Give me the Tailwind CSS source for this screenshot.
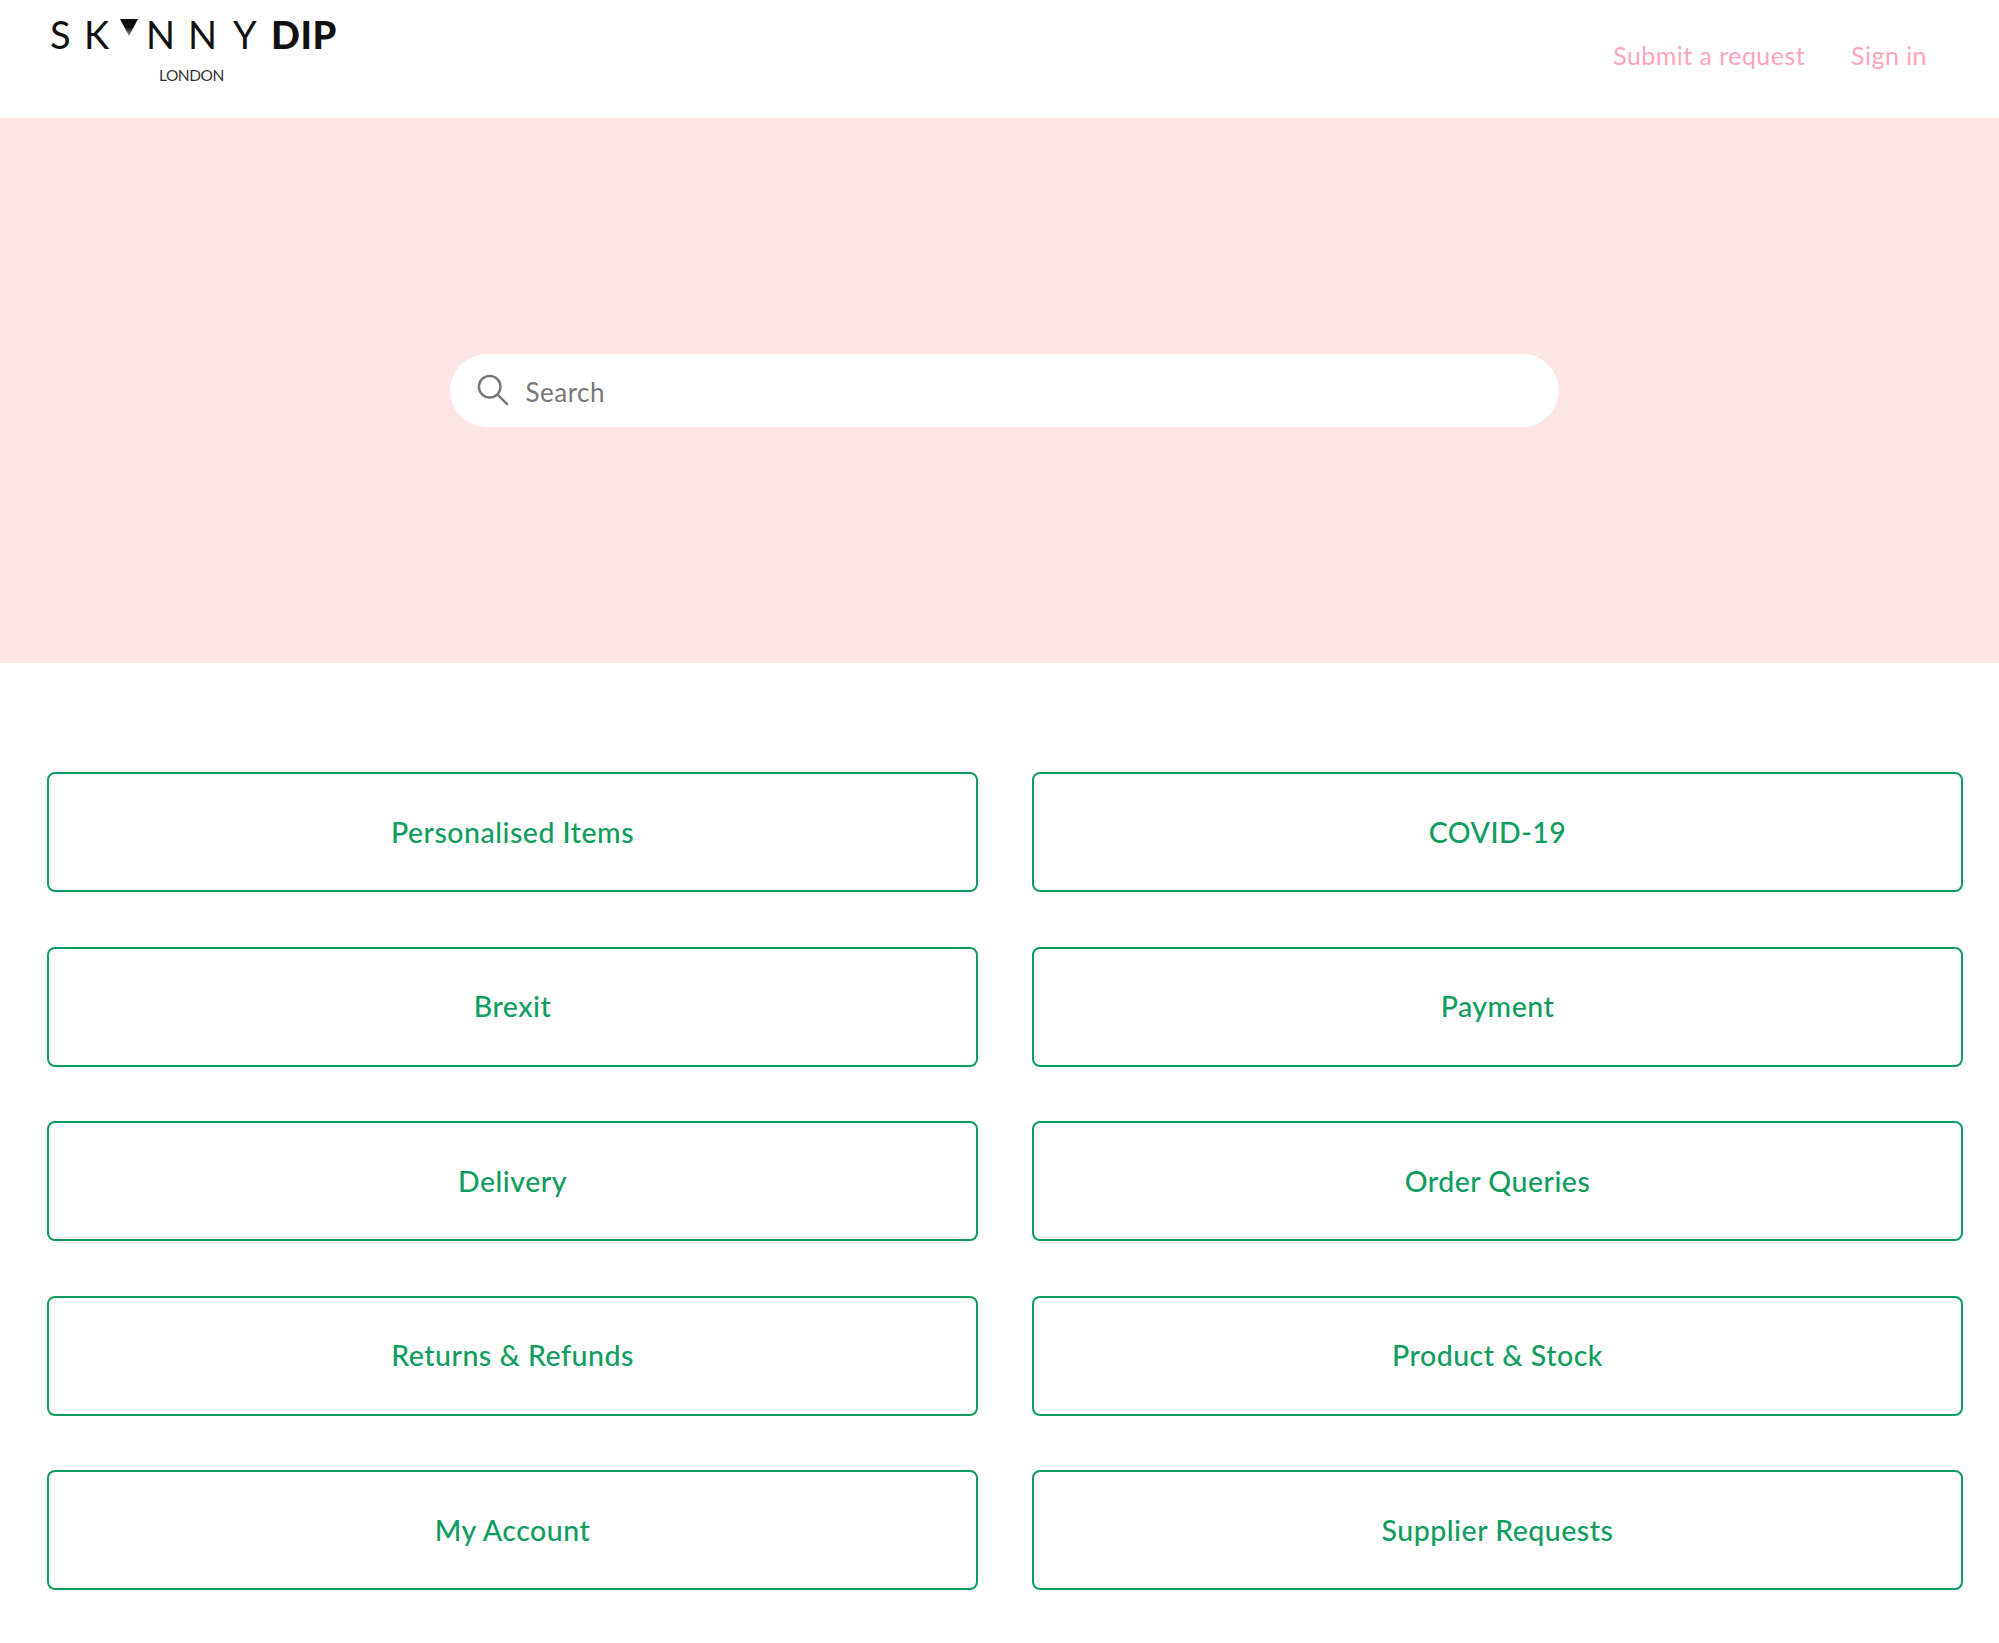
<!DOCTYPE html>
<html lang="en">
  <head>
    <meta charset="UTF-8" />
    <meta name="viewport" content="width=device-width, initial-scale=1.0" />
    <title>Skinny Dip Help Centre</title>
    <script src="https://cdn.jsdelivr.net/npm/@tailwindcss/browser@4"></script>
  </head>
  <body class="bg-white font-['Lato',sans-serif]">
    <header class="h-[118px] flex justify-between pl-[50px] pr-[72px]">
      <a href="#" class="w-[290px] flex flex-col items-start pt-[14px] text-[#111]">
        <div class="flex items-start h-[40px] text-[38px] leading-[40px] font-normal">
          <span class="w-[34px]">S</span>
          <span class="w-[35px]">K</span>
          <svg class="w-[29px] h-[20px] mt-[5px] -ml-[2px]" viewBox="0 0 29 20">
            <defs>
              <linearGradient id="tip" x1="0" y1="0" x2="0" y2="1">
                <stop offset="0.5" stop-color="#111" />
                <stop offset="1" stop-color="#999" />
              </linearGradient>
            </defs>
            <path d="M3 0H21L12 17Z" fill="url(#tip)" />
          </svg>
          <span class="w-[42px]">N</span>
          <span class="w-[45px]">N</span>
          <span class="w-[38px]">Y</span>
          <span class="font-black tracking-[0.5px]">DIP</span>
        </div>
        <span class="mt-[12px] ml-[109px] text-[15.500px] leading-[18px] text-[#333] -tracking-[0.5px]">LONDON</span>
      </a>
      <nav class="flex items-center gap-[46px] h-[112px] text-[25px] text-[#ffa3bc] tracking-[0.45px]">
        <a href="#">Submit a request</a>
        <a href="#">Sign in</a>
      </nav>
    </header>

    <section class="h-[545px] bg-[#fce5e5] flex justify-center items-start pt-[236px]">
      <form class="w-[1109px] h-[73px] ml-[9px] bg-white rounded-full flex items-center pl-[27px] gap-[17px]">
        <svg class="w-[32px] h-[32px] -mt-[1px] text-[#777]" viewBox="0 0 34 34" fill="none" stroke="currentColor" stroke-width="2.600" stroke-linecap="round">
          <circle cx="13.500" cy="13.500" r="11.500" />
          <path d="M21.800 21.800L32 32" />
        </svg>
        <input type="text" placeholder="Search" class="flex-1 pt-[3px] text-[26px] tracking-[0.5px] text-[#777] placeholder:text-[#777] outline-none" />
      </form>
    </section>

    <main class="grid grid-cols-2 gap-x-[54px] gap-y-[54.500px] pt-[109px] pl-[47px] pr-[36px]">
      <a href="#" class="h-[120px] flex items-center justify-center border-2 border-[#0f9d5f] rounded-[8px] text-[28.500px] font-medium text-[#0f9d5f] tracking-[0.5px]">Personalised Items</a>
      <a href="#" class="h-[120px] flex items-center justify-center border-2 border-[#0f9d5f] rounded-[8px] text-[28.500px] font-medium text-[#0f9d5f] tracking-[0.5px]">COVID-19</a>
      <a href="#" class="h-[120px] flex items-center justify-center border-2 border-[#0f9d5f] rounded-[8px] text-[28.500px] font-medium text-[#0f9d5f] tracking-[0.5px]">Brexit</a>
      <a href="#" class="h-[120px] flex items-center justify-center border-2 border-[#0f9d5f] rounded-[8px] text-[28.500px] font-medium text-[#0f9d5f] tracking-[0.5px]">Payment</a>
      <a href="#" class="h-[120px] flex items-center justify-center border-2 border-[#0f9d5f] rounded-[8px] text-[28.500px] font-medium text-[#0f9d5f] tracking-[0.5px]">Delivery</a>
      <a href="#" class="h-[120px] flex items-center justify-center border-2 border-[#0f9d5f] rounded-[8px] text-[28.500px] font-medium text-[#0f9d5f] tracking-[0.5px]">Order Queries</a>
      <a href="#" class="h-[120px] flex items-center justify-center border-2 border-[#0f9d5f] rounded-[8px] text-[28.500px] font-medium text-[#0f9d5f] tracking-[0.5px]">Returns &amp; Refunds</a>
      <a href="#" class="h-[120px] flex items-center justify-center border-2 border-[#0f9d5f] rounded-[8px] text-[28.500px] font-medium text-[#0f9d5f] tracking-[0.5px]">Product &amp; Stock</a>
      <a href="#" class="h-[120px] flex items-center justify-center border-2 border-[#0f9d5f] rounded-[8px] text-[28.500px] font-medium text-[#0f9d5f] tracking-[0.5px]">My Account</a>
      <a href="#" class="h-[120px] flex items-center justify-center border-2 border-[#0f9d5f] rounded-[8px] text-[28.500px] font-medium text-[#0f9d5f] tracking-[0.5px]">Supplier Requests</a>
    </main>
  </body>
</html>
